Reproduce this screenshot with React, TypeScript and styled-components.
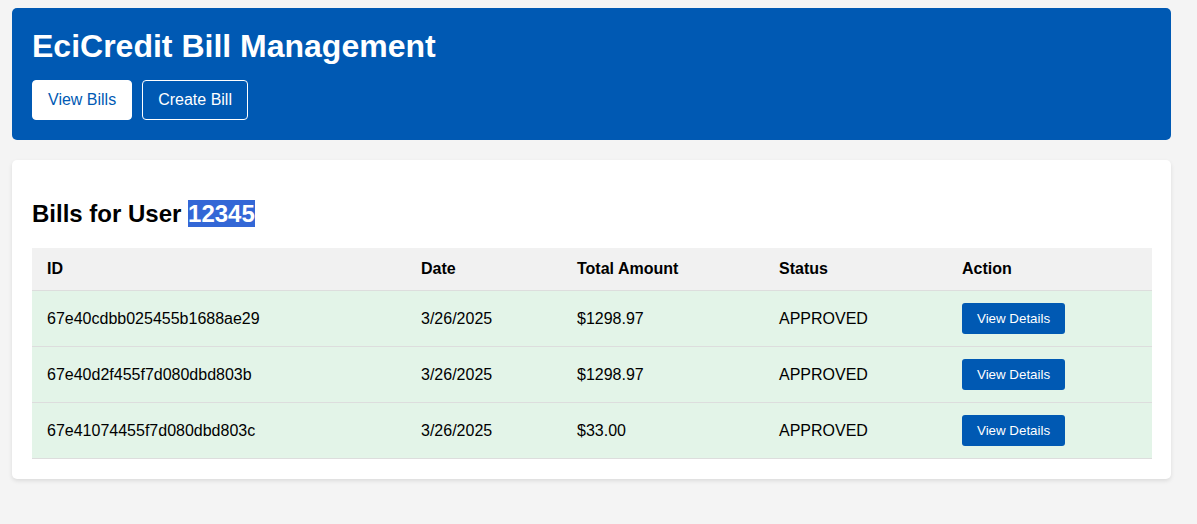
import React from "react";
import styled, { createGlobalStyle } from "styled-components";

const GlobalStyle = createGlobalStyle`
  html, body {
    margin: 0;
    padding: 0;
    background: #f4f4f4;
    font-family: "Liberation Sans", Arial, sans-serif;
    color: #000;
  }
`;

const Page = styled.div`
  width: 1159px;
  margin-left: 12px;
  padding-top: 8px;
  padding-bottom: 20px;
`;

const Header = styled.header`
  background: #0059b3;
  color: #fff;
  border-radius: 5px;
  padding: 20px;
`;

const Title = styled.h1`
  margin: 0 0 15px;
  font-size: 32px;
  font-weight: bold;
  line-height: 37px;
`;

const Nav = styled.nav`
  display: flex;
  gap: 10px;
`;

const NavButton = styled.button<{ $active?: boolean }>`
  font-family: "Liberation Sans", Arial, sans-serif;
  font-size: 16px;
  line-height: 18px;
  padding: 10px 15px;
  border-radius: 4px;
  border: 1px solid #fff;
  background: ${(p) => (p.$active ? "#fff" : "transparent")};
  color: ${(p) => (p.$active ? "#0059b3" : "#fff")};
  cursor: pointer;
`;

const Card = styled.section`
  margin-top: 20px;
  background: #fff;
  border-radius: 5px;
  padding: 20px;
  box-shadow: 0 2px 4px rgba(0, 0, 0, 0.1);
`;

const Heading = styled.h2`
  margin: 20px 0;
  font-size: 24px;
  font-weight: bold;
  line-height: 28px;
`;

const Selected = styled.span`
  background: #3367d6;
  color: #fff;
`;

const Table = styled.table`
  width: 100%;
  border-collapse: collapse;
  table-layout: fixed;
`;

const Th = styled.th<{ $w: number }>`
  box-sizing: border-box;
  width: ${(p) => p.$w}px;
  text-align: left;
  font-size: 16px;
  font-weight: bold;
  line-height: 18px;
  padding: 12px 15px;
  background: #f1f1f1;
  border-bottom: 1px solid #ddd;
`;

const Row = styled.tr`
  background: #e3f4e8;
`;

const Td = styled.td`
  font-size: 16px;
  line-height: 18px;
  padding: 12px 15px;
  border-bottom: 1px solid #ddd;
  vertical-align: middle;
`;

const DetailsButton = styled.button`
  font-family: "Liberation Sans", Arial, sans-serif;
  font-size: 13.333px;
  padding: 8px 15px;
  border: none;
  border-radius: 3px;
  background: #0059b3;
  color: #fff;
  cursor: pointer;
  display: block;
`;

const bills = [
  { id: "67e40cdbb025455b1688ae29", date: "3/26/2025", total: "$1298.97", status: "APPROVED" },
  { id: "67e40d2f455f7d080dbd803b", date: "3/26/2025", total: "$1298.97", status: "APPROVED" },
  { id: "67e41074455f7d080dbd803c", date: "3/26/2025", total: "$33.00", status: "APPROVED" },
];

const columns = [
  { label: "ID", w: 374 },
  { label: "Date", w: 156 },
  { label: "Total Amount", w: 202 },
  { label: "Status", w: 183 },
  { label: "Action", w: 205 },
];

export default function App() {
  return (
    <>
      <GlobalStyle />
      <Page>
        <Header>
          <Title>EciCredit Bill Management</Title>
          <Nav>
            <NavButton $active>View Bills</NavButton>
            <NavButton>Create Bill</NavButton>
          </Nav>
        </Header>
        <Card>
          <Heading>
            Bills for User <Selected>12345</Selected>
          </Heading>
          <Table>
            <thead>
              <tr>
                {columns.map((c) => (
                  <Th key={c.label} $w={c.w}>
                    {c.label}
                  </Th>
                ))}
              </tr>
            </thead>
            <tbody>
              {bills.map((b) => (
                <Row key={b.id}>
                  <Td>{b.id}</Td>
                  <Td>{b.date}</Td>
                  <Td>{b.total}</Td>
                  <Td>{b.status}</Td>
                  <Td>
                    <DetailsButton>View Details</DetailsButton>
                  </Td>
                </Row>
              ))}
            </tbody>
          </Table>
        </Card>
      </Page>
    </>
  );
}
